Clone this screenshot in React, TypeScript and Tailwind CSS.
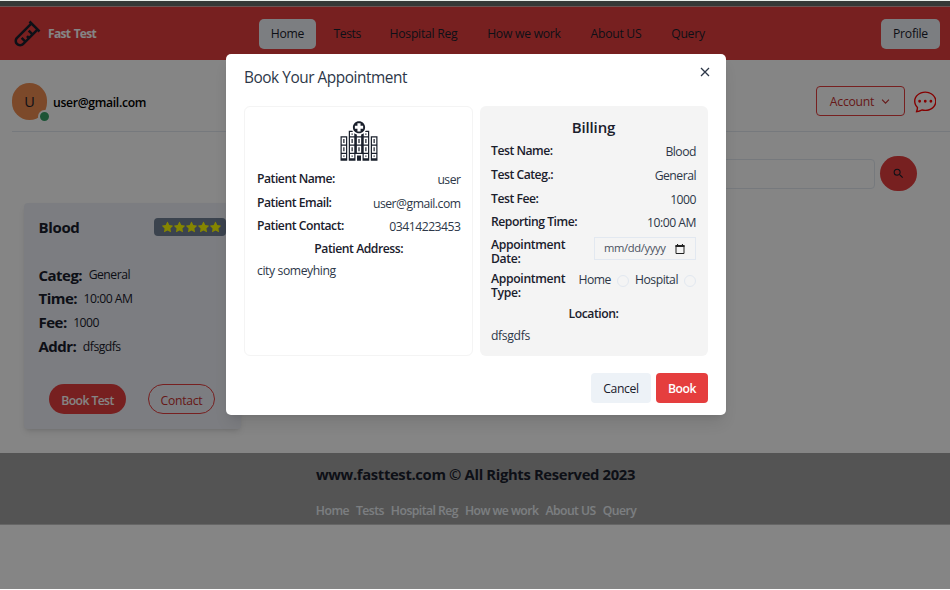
import React from "react";
import { BiTestTube } from "react-icons/bi";
import { GiHospital } from "react-icons/gi";
import { BsChatDots } from "react-icons/bs";
import { AiFillStar } from "react-icons/ai";
import { MdSearch } from "react-icons/md";

const links = ["Tests", "Hospital Reg", "How we work", "About US", "Query"];

function Header() {
  return (
    <header className="flex h-[53px] items-center bg-[#e53e3e] pr-[10px] pl-3 text-[12.2px] font-medium tracking-[-0.27px] text-[#1a202c]">
      <BiTestTube className="size-[30px] text-[#1a202c]" />
      <span className="ml-[6px] w-[212px] pt-px text-[12px] font-bold tracking-[-0.7px] text-white [word-spacing:1px]">Fast Test</span>
      <nav className="flex flex-1 items-center">
        <span className="-ml-px flex h-[30px] w-[57px] items-center justify-center rounded-[5px] bg-[#edf2f7] pt-0.5">Home</span>
        <div className="ml-[17.5px] flex gap-[29.8px] pt-0.5">
          {links.map((l) => (
            <span key={l} className="whitespace-nowrap first:-mr-px first:tracking-[-0.45px]">{l}</span>
          ))}
        </div>
      </nav>
      <span className="flex h-[30px] w-[59px] items-center justify-center rounded-[5px] bg-[#edf2f7] pt-0.5">Profile</span>
    </header>
  );
}

function UserBar() {
  return (
    <div className="ml-3 flex h-[72px] items-center border-b border-[#e2e8f0] pt-[12px] pr-[14px] text-[#1a202c]">
      <div className="relative mt-[-1px] flex h-[37px] w-[35px] items-center justify-center rounded-full bg-[#ed8c51] text-[14.5px] font-medium">
        <span className="mt-0.5">U</span>
        <span className="absolute -right-[4px] -bottom-[3px] size-[13px] rounded-full border-[2.5px] border-white bg-[#38a169]" />
      </div>
      <span className="ml-[6px] flex-1 pt-[3px] text-[12.2px] font-[650] tracking-[-0.32px] text-black">user@gmail.com</span>
      <button className="mt-[-1px] flex h-[30px] w-[89px] items-center justify-center gap-[7px] rounded-[4px] border border-[#e53e3e] pt-[3px] text-[12.2px] font-medium tracking-[-0.24px] text-[#c53030]">
        Account
        <svg viewBox="0 0 10 10" className="mt-[-3px] size-[9px]" fill="none" stroke="currentColor" strokeWidth="1.3">
          <path d="M1.2 3 5 6.8 8.8 3" />
        </svg>
      </button>
      <BsChatDots className="ml-[9px] size-[22.5px] text-[#ff0000]" />
    </div>
  );
}

function SearchBar() {
  return (
    <div className="flex h-[71px] items-center justify-end pt-[12px] pr-[33px]">
      <div className="h-[30px] w-[560px] rounded-[4px] border border-[#e2e8f0]" />
      <div className="ml-[5px] flex h-[35px] w-[37px] items-center justify-center rounded-full bg-[#e53e3e] text-[#1a202c]">
        <MdSearch className="size-[13px]" />
      </div>
    </div>
  );
}

const details = [
  ["Categ:", "General"],
  ["Time:", "10:00 AM"],
  ["Fee:", "1000"],
  ["Addr:", "dfsgdfs"],
];

function TestCard() {
  return (
    <div className="ml-6 h-[226px] w-[217px] rounded-[4px] bg-[#edf0f7] pl-[14.5px] text-[#1a202c] shadow-md">
      <div className="flex items-center pt-[13px]">
        <span className="w-[115.5px] text-[15px] leading-[22px] font-bold tracking-[-0.35px]">Blood</span>
        <div className="flex h-[18px] w-[72px] items-center rounded-[4px] bg-[#718096] pl-[7px] text-[#ffff00]">
          {[0, 1, 2, 3, 4].map((i) => (
            <AiFillStar key={i} className="mr-[-1px] size-[13px] shrink-0" />
          ))}
        </div>
      </div>
      <div className="mt-[25px]">
        {details.map(([k, v]) => (
          <div key={k} className="flex h-[23.8px] items-center gap-[6.5px]">
            <span className="text-[15px] font-bold tracking-[-0.52px]">{k}</span>
            <span className="pt-px text-[12.2px] font-normal tracking-[-0.5px]">{v}</span>
          </div>
        ))}
      </div>
      <div className="mt-[26px] flex">
        <button className="ml-[10.5px] flex h-[30px] w-[77px] items-center justify-center rounded-full bg-[#e53e3e] pt-[3px] text-[12.2px] font-semibold tracking-[-0.6px] text-white">Book Test</button>
        <button className="ml-[22px] flex h-[30px] w-[67px] items-center justify-center rounded-full border border-[#e53e3e] pt-[3px] text-[12.2px] font-medium tracking-[-0.27px] text-[#c53030]">Contact</button>
      </div>
    </div>
  );
}

function Footer() {
  return (
    <footer className="mt-[24px] flex h-[72px] flex-col items-center border-b border-[#c4c4c4] bg-[#a2a2a2] pl-px">
      <p className="mt-[10px] text-[14.8px] leading-[22px] font-bold tracking-[-0.34px] whitespace-nowrap text-[#1a202c]">www.fasttest.com © All Rights Reserved 2023</p>
      <div className="mt-[17px] flex gap-[7px] pl-px text-[12.2px] leading-[18px] font-semibold tracking-[-0.54px] whitespace-nowrap text-[#edf2f7]">
        {["Home", ...links].map((l) => (
          <span key={l}>{l}</span>
        ))}
      </div>
    </footer>
  );
}

function Row({ label, value, height }: { label: string; value: string; height: string }) {
  return (
    <div className={`flex items-center justify-between ${height}`}>
      <span className="font-[650] tracking-[-0.48px] text-[#1a202c]">{label}</span>
      <span className="pt-0.5 font-[380] tracking-[-0.5px] text-[#2d3748]">{value}</span>
    </div>
  );
}

function PatientPanel() {
  return (
    <section className="flex h-[250px] w-[229px] flex-col rounded-[6px] border border-[#f4f4f4] pr-[11px] pl-3 text-[12.2px]">
      <GiHospital className="mt-[12px] mb-[4px] size-[44px] self-center text-[#1a202c]" />
      <Row label="Patient Name:" value="user" height="h-[24px]" />
      <Row label="Patient Email:" value="user@gmail.com" height="h-[24px]" />
      <Row label="Patient Contact:" value="03414223453" height="h-[23px]" />
      <span className="self-center leading-[21px] font-[650] tracking-[-0.46px] text-[#1a202c]">Patient Address:</span>
      <span className="leading-[24px] font-[380] tracking-[-0.41px] text-[#2d3748]">city someyhing</span>
    </section>
  );
}

function BillingPanel() {
  return (
    <section className="flex h-[250px] w-[229px] flex-col rounded-[6px] bg-[#f4f4f4] pr-3 pl-[11.5px] text-[12.2px] text-[#1a202c]">
      <h3 className="mt-[10px] mb-px self-center text-[15px] leading-[22px] font-[650] tracking-[-0.15px]">Billing</h3>
      <Row label="Test Name:" value="Blood" height="h-[24px]" />
      <Row label="Test Categ.:" value="General" height="h-[24px]" />
      <Row label="Test Fee:" value="1000" height="h-[24px]" />
      <Row label="Reporting Time:" value="10:00 AM" height="h-[23px]" />
      <div className="mt-[2px] flex h-[34px] justify-between">
        <span className="pt-[2px] leading-[14px] font-[650] tracking-[-0.33px]">Appointment<br />Date:</span>
        <div className="mt-px flex h-[23px] w-[102px] items-center border border-[#e2e8f0] pl-[9px] font-normal tracking-[-0.35px] text-[#4a5160]">
          <span className="w-[71px] text-[11.2px]">mm/dd/yyyy</span>
          <svg viewBox="0 0 10 10" className="h-[10px] w-[10px]">
            <path d="M1 1.5h8v8H1z" fill="none" stroke="#222" strokeWidth="1" />
            <path d="M.5 1h9v2h-9zM2 0h1.1v2H2zM6.9 0H8v2H6.9z" fill="#222" />
          </svg>
        </div>
      </div>
      <div className="flex h-[33px] justify-between">
        <span className="pt-[2px] leading-[14px] font-[650] tracking-[-0.33px]">Appointment<br />Type:</span>
        <div className="flex h-[21px] items-center font-[380] tracking-[-0.48px] text-[#2d3748]">
          Home
          <span className="mr-[6px] ml-[6px] size-3 rounded-full border border-[#e2e8f0]" />
          Hospital
          <span className="ml-[6px] size-3 rounded-full border border-[#e2e8f0]" />
        </div>
      </div>
      <span className="self-center leading-[22px] font-[650] tracking-[-0.46px]">Location:</span>
      <span className="leading-[22px] font-[380] tracking-[-0.36px] text-[#2d3748]">dfsgdfs</span>
    </section>
  );
}

function BookingModal() {
  return (
    <div className="absolute top-[54px] left-[226px] h-[361px] w-[500px] rounded-[5px] bg-white px-[18px] shadow-lg">
      <div className="flex h-[52px] items-start justify-between pt-[12px]">
        <h2 className="text-[15.4px] leading-[23px] font-medium tracking-[-0.46px] text-[#2d3748]">Book Your Appointment</h2>
        <svg viewBox="0 0 10 10" className="mt-px mr-[-2px] size-[10px]" fill="none" stroke="#2d3748" strokeWidth="1.3">
          <path d="M1 1l8 8M9 1 1 9" />
        </svg>
      </div>
      <div className="flex gap-[7px]">
        <PatientPanel />
        <BillingPanel />
      </div>
      <div className="mt-[17px] flex justify-end gap-[5px] text-[12.2px]">
        <button className="flex h-[30px] w-[60px] items-center justify-center rounded-[4px] bg-[#edf2f7] pt-[2px] font-medium tracking-[-0.35px] text-[#1a202c]">Cancel</button>
        <button className="flex h-[30px] w-[52px] items-center justify-center rounded-[4px] bg-[#e53e3e] pt-[2px] font-semibold tracking-[-0.5px] text-white">Book</button>
      </div>
    </div>
  );
}

export default function App() {
  return (
    <div className="relative h-[590px] w-[950px] overflow-hidden bg-white font-['Open_Sans','Noto_Sans',sans-serif]">
      <div className="h-[7px] border-b border-[#cfa0a0] bg-[#666e6a]">
        <div className="h-px bg-[#eaf0ec]" />
      </div>
      <Header />
      <UserBar />
      <SearchBar />
      <TestCard />
      <Footer />
      <div className="absolute inset-x-0 top-px bottom-px bg-black/48" />
      <BookingModal />
    </div>
  );
}
